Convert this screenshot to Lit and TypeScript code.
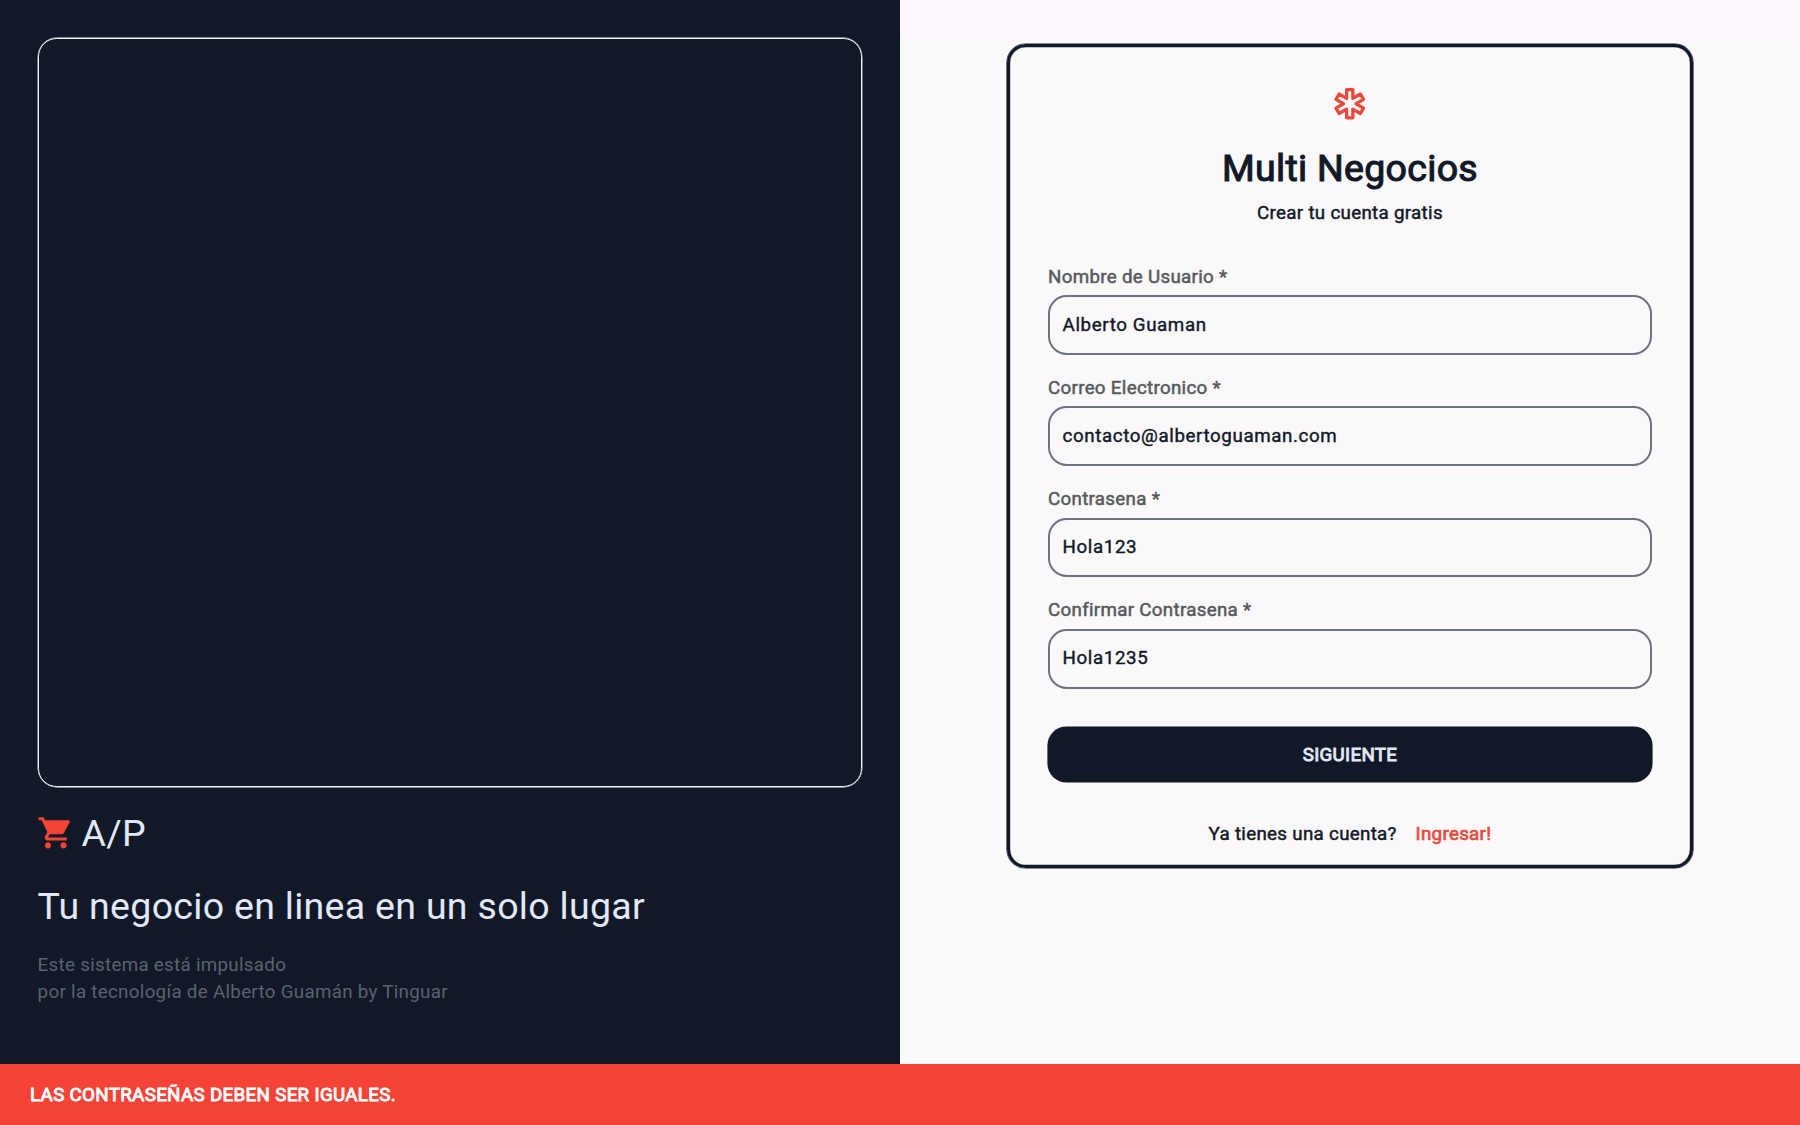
import { LitElement, html, css } from "lit";
import { customElement } from "lit/decorators.js";

interface Field { label: string; value: string; }

const FIELDS: Field[] = [
  { label: "Nombre de Usuario *", value: "Alberto Guaman" },
  { label: "Correo Electronico *", value: "contacto@albertoguaman.com" },
  { label: "Contrasena *", value: "Hola123" },
  { label: "Confirmar Contrasena *", value: "Hola1235" },
];

@customElement("app-root")
export class AppRoot extends LitElement {
  static styles = css`
    :host { display: block; width: 1800px; height: 1125px; overflow: hidden;
      font-family: Roboto, sans-serif; font-size: 18.75px; letter-spacing: 0.3px; color: #111827; }
    * { box-sizing: border-box; }
    .page { display: flex; flex-direction: column; height: 1125px; }
    .panes { display: flex; height: 1063.5px; }
    .brand { width: 900px; padding: 38px 37.6px; background: #111827; color: #e2e8f8; }
    .frame { width: 824px; height: 749px; border: 1px solid #f3f4f6; border-radius: 18.75px; box-shadow: 0 0 0 0.4px #f3f4f6; }
    .logo { display: flex; align-items: center; gap: 6.6px; margin-top: 24px; height: 44px; font-size: 37.5px; }
    .logo svg { width: 37.5px; height: 37.5px; margin-left: -0.3px; fill: #f44336; }
    .slogan { margin-top: 28px; height: 47px; line-height: 47px; font-size: 37.5px; }
    .note { margin-top: 22px; line-height: 27px; color: #5c6370; white-space: pre-line; }
    .side { width: 900px; padding-top: 37.5px; background: #fef7ff; }
    .pane { height: 1026px; padding-top: 6.5px; background: #faf8f9; display: flex; justify-content: center; align-items: flex-start; }
    .card { width: 686px; height: 824px; border: 3px solid #111827; border-radius: 18.75px;
      box-shadow: 0 0 0 0.6px #111827, inset 0 0 0 0.2px #111827;
      padding: 38.45px 38px 0; display: flex; flex-direction: column; }
    .star { flex: none; align-self: center; width: 37.5px; height: 37.5px; }
    .title { margin: 23.3px 0 0; text-align: center; font-size: 37.5px; line-height: 44px; font-weight: 400; -webkit-text-stroke: 1.1px currentColor; }
    .sub { margin-top: 10px; line-height: 27px; text-align: center; -webkit-text-stroke: 0.45px currentColor; }
    .fields { flex: none; margin-top: 36.5px; }
    .field { height: 111.2px; }
    .label { display: block; line-height: 27px; height: 31.45px; color: #565a5c; -webkit-text-stroke: 0.5px currentColor; }
    .input { display: flex; align-items: center; height: 59.8px; padding: 0 12.6px 0.8px; border: 2px solid #6b7280; border-radius: 18.75px;
      letter-spacing: 0.6px; -webkit-text-stroke: 0.4px currentColor; }
    .button { flex: none; height: 55px; margin-top: 18.3px; padding: 1.5px 0 0; border: 0; border-radius: 18.75px; background: #111827; color: #e2e8f8;
      box-shadow: 0 0 0 0.6px #111827; font: inherit; letter-spacing: 0.293px; -webkit-text-stroke: 0.9px currentColor; }
    .foot { display: flex; justify-content: center; gap: 18.75px; margin-top: 39px; line-height: 27px; -webkit-text-stroke: 0.45px currentColor; }
    .link { color: #e94a3f; -webkit-text-stroke: 0.7px currentColor; }
    .snack { flex: 1; display: flex; align-items: center; padding: 1.5px 0 0 30px; background: #f44336; color: #fff;
      letter-spacing: 0.32px; -webkit-text-stroke: 0.9px currentColor; }
  `;

  render() {
    return html`
      <div class="page">
        <div class="panes">
          <section class="brand">
            <div class="frame"></div>
            <div class="logo">
              <svg viewBox="0 0 24 24"><path d="M7 18c-1.1 0-1.99.9-1.99 2S5.900 22 7 22s2-.9 2-2-.9-2-2-2zM1 2v2h2l3.600 7.590-1.350 2.450c-.16.280-.25.610-.25.960 0 1.100.9 2 2 2h12v-2H7.420c-.14 0-.25-.11-.25-.25l.03-.12.9-1.630h7.450c.75 0 1.410-.41 1.750-1.030l3.580-6.490c.08-.14.12-.31.12-.48 0-.55-.45-1-1-1H5.210l-.94-2H1zm16 16c-1.100 0-1.990.9-1.990 2s.89 2 1.990 2 2-.9 2-2-.9-2-2-2z"/></svg>
              <span>A/P</span>
            </div>
            <div class="slogan">Tu negocio en linea en un solo lugar</div>
            <div class="note">${"Este sistema está impulsado\npor la tecnología de Alberto Guamán by Tinguar"}</div>
          </section>
          <section class="side">
            <div class="pane">
              <div class="card">
                <svg class="star" viewBox="0 0 24 24" fill="none" stroke="#ea483c" stroke-width="2.1" stroke-linejoin="round"><path d="M10 3h4v5.540l4.790-2.770 2 3.460L16 12l4.790 2.770-2 3.460L14 15.460V21h-4v-5.540l-4.790 2.770-2-3.460L8 12 3.210 9.230l2-3.460L10 8.540z"/></svg>
                <h1 class="title">Multi Negocios</h1>
                <div class="sub">Crear tu cuenta gratis</div>
                <div class="fields">
                  ${FIELDS.map((f) => html`<div class="field"><span class="label">${f.label}</span><div class="input">${f.value}</div></div>`)}
                </div>
                <button class="button">SIGUIENTE</button>
                <div class="foot"><span>Ya tienes una cuenta?</span><span class="link">Ingresar!</span></div>
              </div>
            </div>
          </section>
        </div>
        <div class="snack">LAS CONTRASEÑAS DEBEN SER IGUALES.</div>
      </div>`;
  }
}
